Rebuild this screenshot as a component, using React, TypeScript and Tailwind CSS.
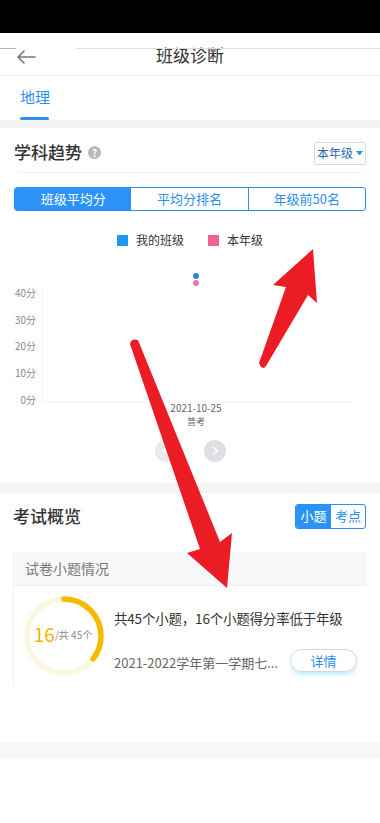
import React from 'react';

const FONT = { fontFamily: '"Noto Sans CJK SC", "Noto Sans", sans-serif' };

const Ring: React.FC<{ done: number; total: number }> = ({ done, total }) => {
  const r = 37;
  const c = 2 * Math.PI * r;
  const len = (done / total) * c;
  return (
    <div className="relative w-[80px] h-[80px] shrink-0">
      <svg width="80" height="80" viewBox="0 0 80 80" className="absolute inset-0">
        <circle cx="40" cy="40" r={r} fill="none" stroke="#fbf7df" strokeWidth="5.5" />
        <circle
          cx="40"
          cy="40"
          r={r}
          fill="none"
          stroke="#f7b900"
          strokeWidth="5.5"
          strokeLinecap="round"
          strokeDasharray={`${len} ${c}`}
          transform="rotate(-90 40 40)"
        />
      </svg>
      <div className="absolute inset-0 flex items-center justify-center pb-[6px] pr-[2px]">
        <span className="text-[19px] leading-none text-[#f5b400]">{done}</span>
        <span className="text-[10px] leading-none text-[#888] mt-[4px]">/共 {total}个</span>
      </div>
    </div>
  );
};

const Arrows: React.FC = () => (
  <svg width="380" height="823" className="absolute inset-0 pointer-events-none">
    <path
      d="M313 249 L317 303 L308 295 L266 366 Q262 371 259 363 L286 287 L273 285 Z"
      fill="#ec1c24"
    />
    <path
      d="M130 344 Q131 338 138 340 L220 542 L232 533 L227 588 L187 553 L200 549 Z"
      fill="#ec1c24"
    />
  </svg>
);

export default function App() {
  const yLabels = [
    { t: '40分', y: 35 },
    { t: '30分', y: 62 },
    { t: '20分', y: 88 },
    { t: '10分', y: 115 },
    { t: '0分', y: 142 },
  ];

  return (
    <div className="relative w-[380px] min-h-[823px] bg-white overflow-hidden" style={FONT}>
      {/* status bar */}
      <div className="h-[33px] bg-black" />

      {/* header */}
      <div className="relative h-[43px] border-b border-[#ececec] flex items-center justify-center">
        <div className="absolute left-0 right-0 top-[15px] flex">
          <div className="w-[16px] h-px bg-[#b5b5b5]" />
          <div className="w-[60px]" />
          <div className="flex-1 h-px bg-[#dcdcdc]" />
        </div>
        <svg width="20" height="16" viewBox="0 0 20 16" className="absolute left-[16px] top-[16px]">
          <path d="M19 8 H2 M8 2 L2 8 L8 14" fill="none" stroke="#777" strokeWidth="1.6" strokeLinecap="round" strokeLinejoin="round" />
        </svg>
        <span className="text-[17px] text-[#333] mt-[2px]">班级诊断</span>
      </div>

      {/* tab */}
      <div className="h-[44px] px-[20px] flex flex-col">
        <div className="flex-1 flex items-center pt-[2px]">
          <span className="text-[15px] text-[#2a8ff0]">地理</span>
        </div>
        <div className="w-[29px] h-[3px] bg-[#2a8ff0] rounded-sm" />
      </div>
      <div className="h-[8px] bg-[#f2f2f2]" />

      {/* 学科趋势 */}
      <div className="h-[355px] flex flex-col">
        <div className="h-[44px] px-[14px] flex items-center justify-between">
          <div className="flex items-center gap-[6px] pt-[4px]">
            <span className="text-[17px] text-[#333] font-medium">学科趋势</span>
            <span className="w-[13px] h-[13px] rounded-full bg-[#b8b8b8] text-white text-[10px] leading-[13px] text-center font-bold">?</span>
          </div>
          <div className="h-[23px] w-[52px] mt-[6px] border border-[#dcdcdc] rounded-[2px] flex items-center justify-center gap-[3px]">
            <span className="text-[12px] text-[#2a6ab5]">本年级</span>
            <svg width="7" height="5" viewBox="0 0 7 5"><path d="M0 0 H7 L3.5 4.5 Z" fill="#2a8ff0" /></svg>
          </div>
        </div>
        <div className="mx-[18px] h-px bg-[#f0f0f0]" />

        <div className="mx-[14px] mt-[14px] h-[24px] flex border border-[#2a8ff0] rounded-[3px] overflow-hidden text-[13px]">
          <div className="flex-1 bg-[#2a93f5] text-white flex items-center justify-center">班级平均分</div>
          <div className="flex-1 text-[#2a8ff0] flex items-center justify-center border-r border-[#2a8ff0]">平均分排名</div>
          <div className="flex-1 text-[#2a8ff0] flex items-center justify-center">年级前50名</div>
        </div>

        <div className="mt-[20px] flex items-center justify-center gap-[8px] text-[12px] text-[#333]">
          <span className="w-[11px] h-[11px] bg-[#2196f3]" />
          <span className="mr-[16px]">我的班级</span>
          <span className="w-[11px] h-[11px] bg-[#f06292]" />
          <span>本年级</span>
        </div>

        <svg width="380" height="168" className="mt-[13px]">
          <line x1="42" y1="25" x2="42" y2="140" stroke="#f3f3f3" strokeWidth="1" />
          <line x1="45" y1="140" x2="352" y2="140" stroke="#f0f0f0" strokeWidth="1" />
          {yLabels.map((l) => (
            <text key={l.t} x="36" y={l.y} textAnchor="end" fontSize="10" fill="#888" style={FONT}>
              {l.t}
            </text>
          ))}
          <circle cx="196" cy="14" r="3" fill="#2f80d8" />
          <circle cx="196" cy="21" r="3" fill="#e07aa0" />
          <text x="196" y="150" textAnchor="middle" fontSize="10" fill="#666" style={FONT}>2021-10-25</text>
          <text x="196" y="163" textAnchor="middle" fontSize="9" fill="#666" style={FONT}>普考</text>
        </svg>

        <div className="mt-[10px] flex justify-center gap-[27px]">
          <div className="w-[22px] h-[22px] rounded-full bg-[#eaeaea] flex items-center justify-center">
            <svg width="8" height="10" viewBox="0 0 8 10"><path d="M6 1 L2 5 L6 9" fill="none" stroke="#fff" strokeWidth="1.6" /></svg>
          </div>
          <div className="w-[22px] h-[22px] rounded-full bg-[#dedfe2] flex items-center justify-center">
            <svg width="8" height="10" viewBox="0 0 8 10"><path d="M2 1 L6 5 L2 9" fill="none" stroke="#fff" strokeWidth="1.6" /></svg>
          </div>
        </div>
      </div>
      <div className="h-[10px] bg-[#f4f4f4]" />

      {/* 考试概览 */}
      <div className="px-[13px]">
        <div className="h-[49px] flex items-center justify-between pb-[3px]">
          <span className="text-[17px] text-[#333] font-medium">考试概览</span>
          <div className="flex h-[25px] border border-[#2a8ff0] rounded-[3px] overflow-hidden text-[13px] mr-[1px]">
            <div className="w-[35px] bg-[#2a93f5] text-white flex items-center justify-center">小题</div>
            <div className="w-[34px] text-[#2a8ff0] flex items-center justify-center">考点</div>
          </div>
        </div>

        <div className="mt-[10px] border-l border-[#f3f3f3]">
          <div className="h-[34px] bg-[#f7f8fa] border-b border-[#efefef] flex items-center px-[11px] text-[14px] text-[#777]">
            试卷小题情况
          </div>
          <div className="h-[100px] flex items-center pl-[10px] pr-[10px]">
            <Ring done={16} total={45} />
            <div className="flex-1 ml-[10px] mt-[8px] flex flex-col">
              <div className="text-[13.5px] leading-[20px] text-[#333] mb-[25px] whitespace-nowrap tracking-[-0.2px]">共45个小题，16个小题得分率低于年级</div>
              <div className="flex items-center justify-between">
                <span className="text-[13px] text-[#666]">2021-2022学年第一学期七...</span>
                <div className="w-[67px] h-[23px] rounded-full border border-[#d6d6d6] flex items-center justify-center text-[13px] text-[#2a8ff0] shadow-[0_3px_4px_-1px_rgba(80,200,255,0.45)] mt-[-4px]">
                  详情
                </div>
              </div>
            </div>
          </div>
        </div>
      </div>

      <div className="h-[57px]" />
      <div className="h-[16px] bg-[#f7f7f7]" />

      <Arrows />
    </div>
  );
}
